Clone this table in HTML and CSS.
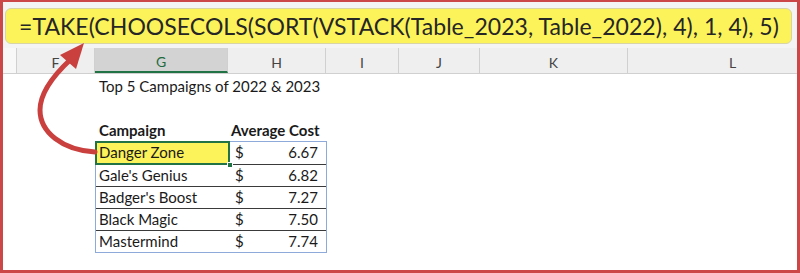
FILE: index.html
```html
<!DOCTYPE html>
<html>
<head>
<meta charset="utf-8">
<link rel="stylesheet" href="styles.css">
</head>
<body>
<div class="frame">
  <div class="formula-area">
    <div class="formula">=TAKE(CHOOSECOLS(SORT(VSTACK(Table_2023, Table_2022), 4), 1, 4), 5)</div>
  </div>
  <div class="colheads">
    <div class="stub"></div>
    <div class="ch">F</div>
    <div class="ch active">G</div>
    <div class="ch">H</div>
    <div class="ch">I</div>
    <div class="ch">J</div>
    <div class="ch">K</div>
    <div class="ch last">L</div>
  </div>
  <div class="sheet">
    <div class="title">Top 5 Campaigns of 2022 &amp; 2023</div>
    <div class="th th-g">Campaign</div>
    <div class="th th-h">Average Cost</div>
    <div class="tbl">
      <div class="row first">
        <div class="c-name sel">Danger Zone<span class="handle"></span></div>
        <div class="c-cost"><span>$</span><span>6.67</span></div>
      </div>
      <div class="row">
        <div class="c-name">Gale's Genius</div>
        <div class="c-cost"><span>$</span><span>6.82</span></div>
      </div>
      <div class="row">
        <div class="c-name">Badger's Boost</div>
        <div class="c-cost"><span>$</span><span>7.27</span></div>
      </div>
      <div class="row">
        <div class="c-name">Black Magic</div>
        <div class="c-cost"><span>$</span><span>7.50</span></div>
      </div>
      <div class="row lastrow">
        <div class="c-name">Mastermind</div>
        <div class="c-cost"><span>$</span><span>7.74</span></div>
      </div>
    </div>
  </div>
  <svg class="arrow" width="800" height="273" viewBox="0 0 800 273">
    <path d="M95,152 C62,150 40,132 40,110 C40,92 54,75 70,60" fill="none" stroke="#c9403e" stroke-width="5" stroke-linecap="round"/>
    <polygon points="84,43 60,55 76,69" fill="#c9403e"/>
  </svg>
</div>
</body>
</html>
```
FILE: styles.css
```css
* { box-sizing: border-box; }
html, body { margin: 0; padding: 0; background: #fff; }
.frame {
  position: relative;
  width: 800px;
  height: 273px;
  border-top: 2px solid #cc4747;
  border-left: 3px solid #cc4747;
  border-right: 3px solid #cc4747;
  border-bottom: 3px solid #cc4747;
  background: #fff;
  overflow: hidden;
  font-family: Lato, "Open Sans", sans-serif;
}
.formula-area {
  background: #f4f4f4;
  padding: 6px 5px 2px 2px;
  height: 46px;
}
.formula {
  height: 36px;
  background: #fcf35b;
  border: 1px solid #d9d3a8;
  border-radius: 6px;
  padding-left: 13px;
  font-size: 23px;
  letter-spacing: 0.05px;
  line-height: 34px;
  color: #262626;
  white-space: nowrap;
}
.colheads {
  display: grid;
  grid-template-columns: 14px 78px 133px 98px 73px 81px 148px 169px;
  height: 26px;
  background: #efefef;
  border-bottom: 1px solid #d0d0d0;
}
.stub { border-right: 1px solid #d0d0d0; background: #f8f8f8; }
.ch {
  display: flex;
  align-items: center;
  justify-content: center;
  font-size: 14px;
  color: #444;
  border-right: 1px solid #d0d0d0;
  padding-top: 4px;
}
.ch.last { border-right: none; padding-left: 40px; }
.ch.active {
  background: #d3d3d3;
  border-bottom: 2px solid #217346;
  color: #1e6b40;
}
.sheet {
  display: grid;
  grid-template-columns: 92px 133px 98px 1fr;
  grid-template-rows: 23px 22px 22px auto;
  font-size: 15px;
  color: #1a1a1a;
}
.title {
  grid-column: 2 / 5;
  grid-row: 1;
  padding-left: 4px;
  padding-top: 3px;
}
.th {
  grid-row: 3;
  font-weight: bold;
  padding-top: 2px;
}
.th-g { grid-column: 2; padding-left: 4px; }
.th-h { grid-column: 3; padding-left: 3px; }
.tbl {
  grid-column: 2 / 4;
  grid-row: 4;
  border: 1px solid #8eaadb;
  width: 232px;
}
.row {
  display: grid;
  grid-template-columns: 133px 98px;
  height: 22px;
  border-top: 1px solid #3a3a3a;
}
.row.first { border-top: none; }
.c-name {
  position: relative;
  padding-left: 3px;
  line-height: 21px;
}
.c-name.sel {
  background: #fcf35b;
  outline: 2px solid #217346;
  outline-offset: -1px;
}
.handle {
  position: absolute;
  right: -4px;
  bottom: -4px;
  width: 6px;
  height: 6px;
  background: #217346;
  border: 1px solid #fff;
}
.c-cost {
  display: flex;
  justify-content: space-between;
  padding-left: 6px;
  padding-right: 9px;
  line-height: 21px;
}
.arrow {
  position: absolute;
  left: -3px;
  top: -2px;
  pointer-events: none;
}
```
